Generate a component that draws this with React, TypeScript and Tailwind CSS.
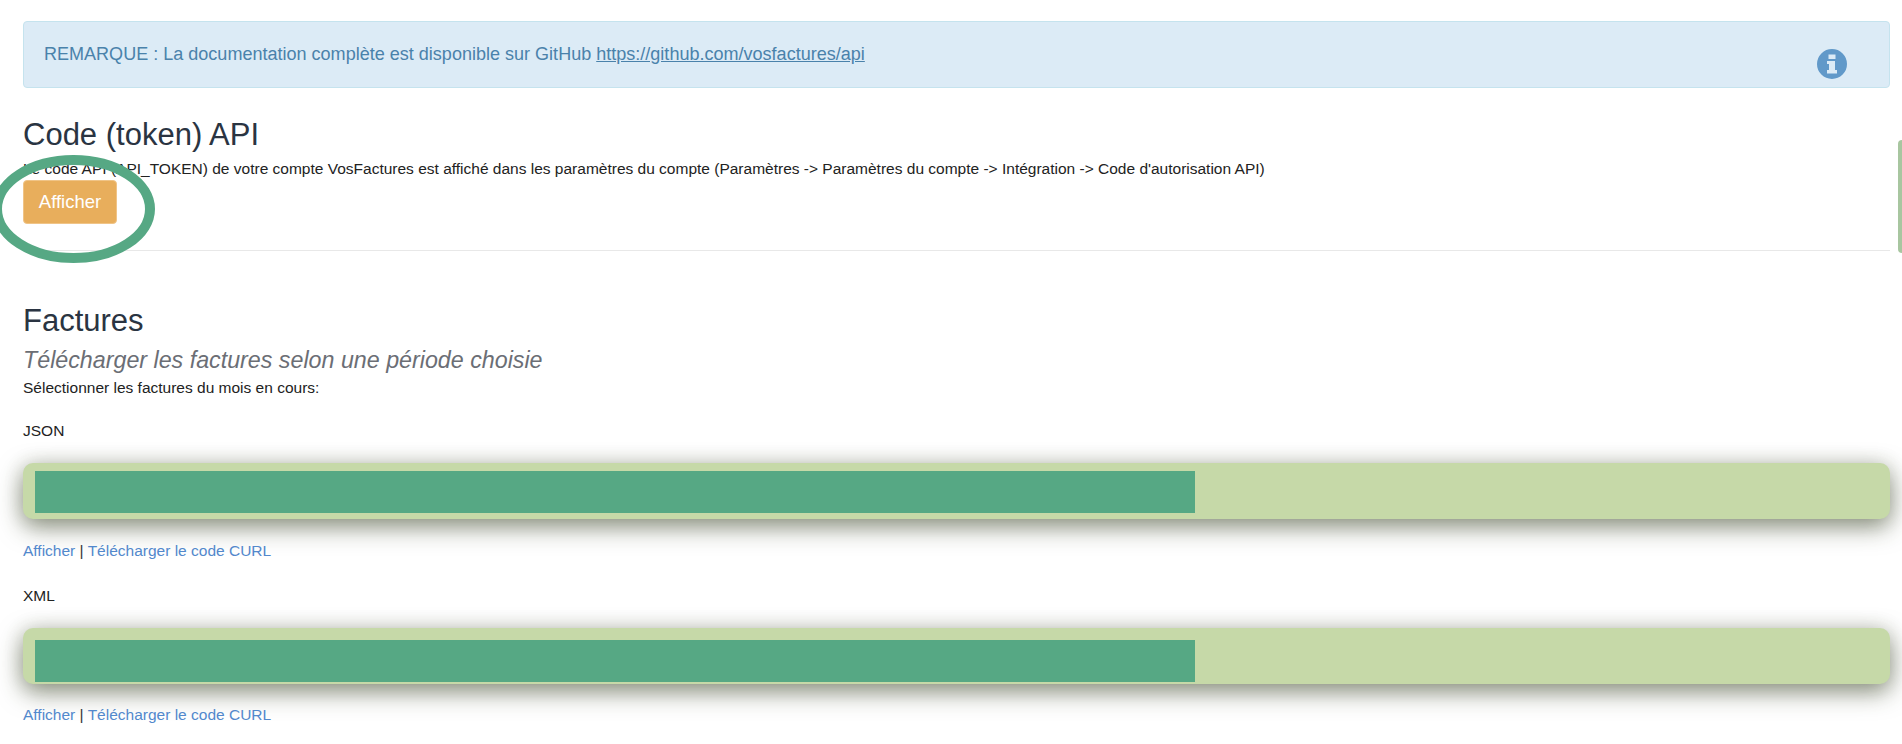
function InfoIcon() {
  return (
    <svg className="mt-[19px]" width="30" height="30" viewBox="0 0 30 30">
      <path
        fill="#6199c9"
        fillRule="evenodd"
        d="M15 0a15 15 0 1 1 0 30a15 15 0 0 1 0-30ZM11.500 5.500v4.500h7v-4.500ZM10 12v3h2v6h-2v3.500h10v-3.500h-2v-9Z"
      />
    </svg>
  );
}

function DownloadBar({ className }: { className: string }) {
  return (
    <div className={`h-14 rounded-[10px] bg-[#c6d9a8] pl-3 shadow-[0_8px_24px_rgba(50,60,30,0.55),0_0_20px_rgba(50,60,30,0.14)] ${className}`}>
      <div className="h-[42px] w-[1160px] bg-[#56a884]" />
    </div>
  );
}

function Links({ className }: { className: string }) {
  return (
    <p className={`h-5 text-[15.5px] leading-5 text-[#333] ${className}`}>
      <a className="text-[#5288cc]">Afficher</a> | <a className="text-[#5288cc]">Télécharger le code CURL</a>
    </p>
  );
}

export default function App() {
  return (
    <div className="relative h-[744px] overflow-hidden bg-white pt-[21px] pr-3 pl-[23px] font-['Liberation_Sans',sans-serif] text-[#222]">
      {/* Remarque */}
      <div className="flex h-[67px] items-center justify-between rounded border border-[#c5e3ee] bg-[#dcebf6] pr-[42px] pl-[20px] text-[18.05px] text-[#4a82ab]">
        <span>
          REMARQUE : La documentation complète est disponible sur GitHub <a className="underline">https://github.com/vosfactures/api</a>
        </span>
        <InfoIcon />
      </div>

      {/* Code API */}
      <h3 className="mt-[29px] text-[31px] leading-[36px] text-[#2a3442]">Code (token) API</h3>
      <p className="mt-[6px] text-[15.5px] leading-5">
        Le code API (API_TOKEN) de votre compte VosFactures est affiché dans les paramètres du compte (Paramètres -&gt; Paramètres du compte -&gt; Intégration -&gt; Code d'autorisation API)
      </p>
      <button className="mt-[1px] flex h-[44px] w-[94px] items-center justify-center rounded border border-[#f0c487] bg-[#e8ae5c] text-[18.5px] text-white">
        Afficher
      </button>
      <hr className="mt-[26px] border-[#e8e8e8]" />

      {/* Factures */}
      <h3 className="mt-[52px] text-[31px] leading-[36px] text-[#2a3442]">Factures</h3>
      <p className="mt-[7px] text-[23.25px] leading-[28px] text-[#6b6e75] italic">Télécharger les factures selon une période choisie</p>
      <p className="mt-[4px] text-[15.5px] leading-5">Sélectionner les factures du mois en cours:</p>
      <p className="mt-[23px] text-[15.5px] leading-5">JSON</p>
      <DownloadBar className="mt-[22px] pt-2" />
      <Links className="mt-[22px]" />
      <p className="mt-[25px] text-[15.5px] leading-5">XML</p>
      <DownloadBar className="mt-[22px] pt-3" />
      <Links className="mt-[21px]" />

      {/* Surlignage */}
      <svg className="absolute top-[150px] left-[-12px]" width="175" height="120" viewBox="0 0 175 120" fill="none">
        <ellipse cx="85.5" cy="59" rx="76.5" ry="49" stroke="#56a884" strokeWidth="10" />
      </svg>
      <div className="absolute top-[140px] right-0 h-[113px] w-1 rounded-l-md bg-[#a8c6a0]" />
    </div>
  );
}
